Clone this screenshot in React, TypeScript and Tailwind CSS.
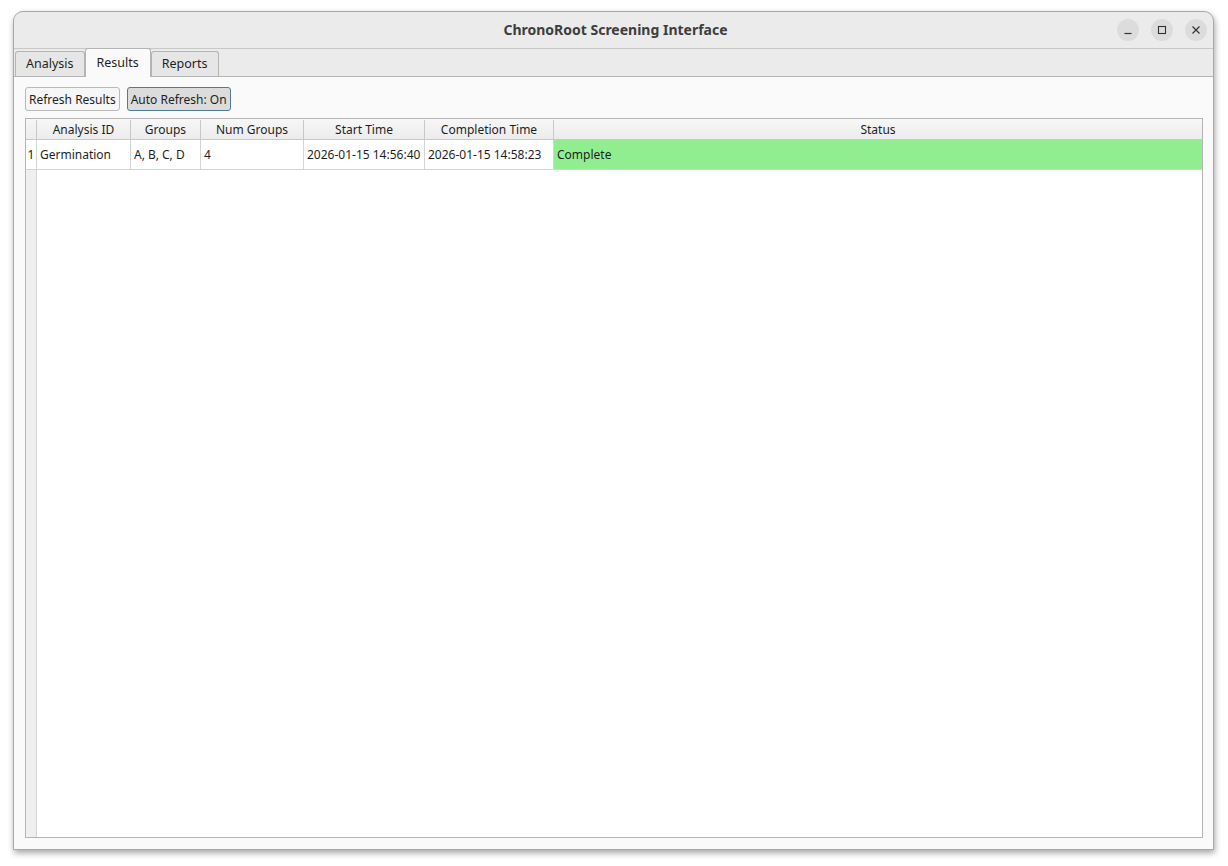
import React from 'react';

const font = { fontFamily: '"Noto Sans", "DejaVu Sans", sans-serif' };

interface Column {
  key: string;
  title: string;
  width: string;
}

const columns: Column[] = [
  { key: 'id', title: 'Analysis ID', width: 'w-[94px]' },
  { key: 'groups', title: 'Groups', width: 'w-[70px]' },
  { key: 'num', title: 'Num Groups', width: 'w-[103px]' },
  { key: 'start', title: 'Start Time', width: 'w-[121px]' },
  { key: 'end', title: 'Completion Time', width: 'w-[129px]' },
  { key: 'status', title: 'Status', width: 'flex-1' },
];

const rows = [
  {
    id: 'Germination',
    groups: 'A, B, C, D',
    num: '4',
    start: '2026-01-15 14:56:40',
    end: '2026-01-15 14:58:23',
    status: 'Complete',
  },
];

function WindowButton({ children }: { children: React.ReactNode }) {
  return (
    <div className="flex h-[22px] w-[22px] items-center justify-center rounded-full bg-[#dcdcdc]">
      {children}
    </div>
  );
}

function Tab({ label, active }: { label: string; active?: boolean }) {
  if (active) {
    return (
      <div className="relative z-10 -mb-px flex h-[29px] items-center rounded-t-[3px] border border-b-0 border-[#b4b4b4] bg-[#fafafa] px-[11px] text-[12.5px] text-[#1e1e1e]">
        {label}
      </div>
    );
  }
  return (
    <div className="mt-[3px] flex h-[25px] items-center rounded-t-[3px] border border-b-0 border-[#b4b4b4] bg-[#e6e6e6] px-[10px] pt-px text-[12.5px] text-[#1e1e1e]">
      {label}
    </div>
  );
}

export default function App() {
  return (
    <div className="min-h-screen bg-white pl-[13px] pt-[11px]" style={font}>
      <div className="flex h-[839px] w-[1201px] flex-col rounded-t-[10px] border border-[#a8a8a8] bg-[#ebebeb] shadow-[1px_3px_6px_rgba(0,0,0,0.35)]">
        {/* title bar */}
        <div className="relative flex h-[37px] items-center justify-center border-b border-[#c8c8c8] pb-[2px]">
          <span className="pl-[4px] text-[14px] font-bold text-[#3d3d3d]">ChronoRoot Screening Interface</span>
          <div className="absolute right-[6px] top-[7px] flex gap-[12px]">
            <WindowButton>
              <svg width="10" height="10" viewBox="0 0 10 10"><path d="M1.5 8.5h7" stroke="#333" strokeWidth="1.2" /></svg>
            </WindowButton>
            <WindowButton>
              <svg width="10" height="10" viewBox="0 0 10 10"><rect x="1.5" y="1.5" width="7" height="7" fill="none" stroke="#333" strokeWidth="1.1" /></svg>
            </WindowButton>
            <WindowButton>
              <svg width="10" height="10" viewBox="0 0 10 10"><path d="M1.5 1.5l7 7M8.5 1.5l-7 7" stroke="#333" strokeWidth="1.2" /></svg>
            </WindowButton>
          </div>
        </div>

        {/* tabs */}
        <div className="flex h-[27px] items-end pl-px">
          <Tab label="Analysis" />
          <Tab label="Results" active />
          <Tab label="Reports" />
        </div>

        {/* tab page */}
        <div className="flex flex-1 flex-col gap-[7px] border-t border-[#b4b4b4] bg-[#fafafa] pb-[11px] pl-[11px] pr-[10px] pt-[10px]">
          <div className="flex gap-[7px]">
            <button className="h-[24px] rounded-[3px] border border-[#b9b9b9] bg-[#f6f6f6] px-[3px] pt-px text-[12px] text-[#1e1e1e]">
              Refresh Results
            </button>
            <button className="h-[24px] rounded-[3px] border border-[#4f7b99] bg-[#dcdcdc] px-[3px] pt-px text-[12px] text-[#1e1e1e]">
              Auto Refresh: On
            </button>
          </div>

          <div className="flex flex-1 flex-col border border-[#b4b4b4] bg-white text-[12px] text-[#1e1e1e]">
            {/* header */}
            <div className="flex h-[21px] border-b border-[#c8c8c8] bg-gradient-to-b from-[#f7f7f7] to-[#ececec] pt-px">
              <div className="w-[11px] border-r border-[#c8c8c8]" />
              {columns.map((c) => (
                <div
                  key={c.key}
                  className={`${c.width} flex items-center justify-center border-r border-[#c8c8c8] last:border-r-0`}
                >
                  {c.title}
                </div>
              ))}
            </div>

            <div className="flex flex-1">
              <div className="flex w-[11px] flex-col border-r border-[#d4d4d4] bg-[#efefef]">
                {rows.map((_, i) => (
                  <div key={i} className="flex h-[30px] items-center justify-center border-b border-[#d4d4d4] bg-white">
                    {i + 1}
                  </div>
                ))}
              </div>
              <div className="flex flex-1 flex-col">
                {rows.map((r, i) => (
                  <div key={i} className="flex h-[30px] border-b border-[#d4d4d4]">
                    {columns.map((c) => (
                      <div
                        key={c.key}
                        className={`${c.width} flex items-center border-r border-[#d4d4d4] px-[3px] last:border-r-0 ${
                          c.key === 'status' ? 'bg-[#90ee90]' : ''
                        }`}
                      >
                        {r[c.key as keyof typeof r]}
                      </div>
                    ))}
                  </div>
                ))}
              </div>
            </div>
          </div>
        </div>
      </div>
    </div>
  );
}
